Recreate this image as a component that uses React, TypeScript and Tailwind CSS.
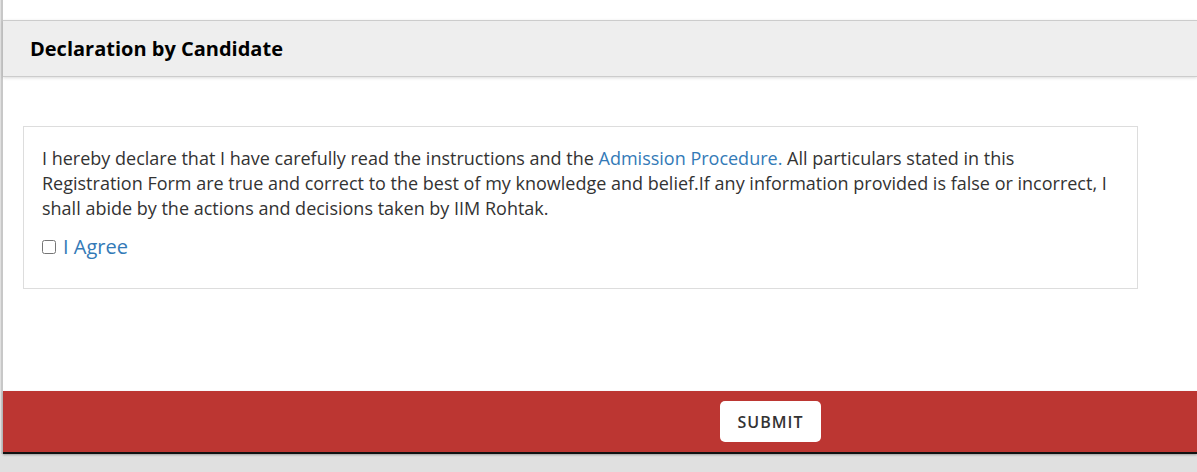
export default function App() {
  return (
    <div className="min-h-[472px] bg-[#e0e0e0] font-['Open_Sans',sans-serif]">
      <div className="ml-px border-l-2 border-[#c8c8c8] bg-white pt-5">
        <div className="flex h-[57px] items-center border-y border-[#cccccc] bg-[#eeeeee] pl-[27px] shadow-[0_1px_3px_rgba(0,0,0,0.15)]">
          <h2 className="text-[20px] font-bold text-black">Declaration by Candidate</h2>
        </div>
        <div className="pb-[102px] pl-5 pt-[49px]">
          <div className="h-[163px] w-[1115px] border border-[#dddddd] px-[18px] pt-[19px]">
            <p className="text-[18px] leading-[25px] text-[#333333]">
              I hereby declare that I have carefully read the instructions and the{" "}
              <a className="text-[#337ab7]">Admission Procedure.</a> All particulars stated in this Registration Form are true and correct to the best of my knowledge and belief.If any information provided is false or incorrect, I shall abide by the actions and decisions taken by IIM Rohtak.
            </p>
            <label className="mt-[13px] flex items-center gap-[7px]">
              <input type="checkbox" className="h-[14px] w-[14px]" />
              <span className="text-[20px] leading-[25px] text-[#337ab7]">I Agree</span>
            </label>
          </div>
        </div>
        <div className="flex h-[63px] items-center border-b-2 border-[#111111] bg-[#bc3632] pl-[717px] shadow-[0_1px_2px_rgba(0,0,0,0.3)]">
          <button className="h-[41px] w-[101px] rounded-[5px] bg-white text-[16px] font-semibold tracking-[1px] text-[#333333]">
            SUBMIT
          </button>
        </div>
      </div>
    </div>
  );
}
